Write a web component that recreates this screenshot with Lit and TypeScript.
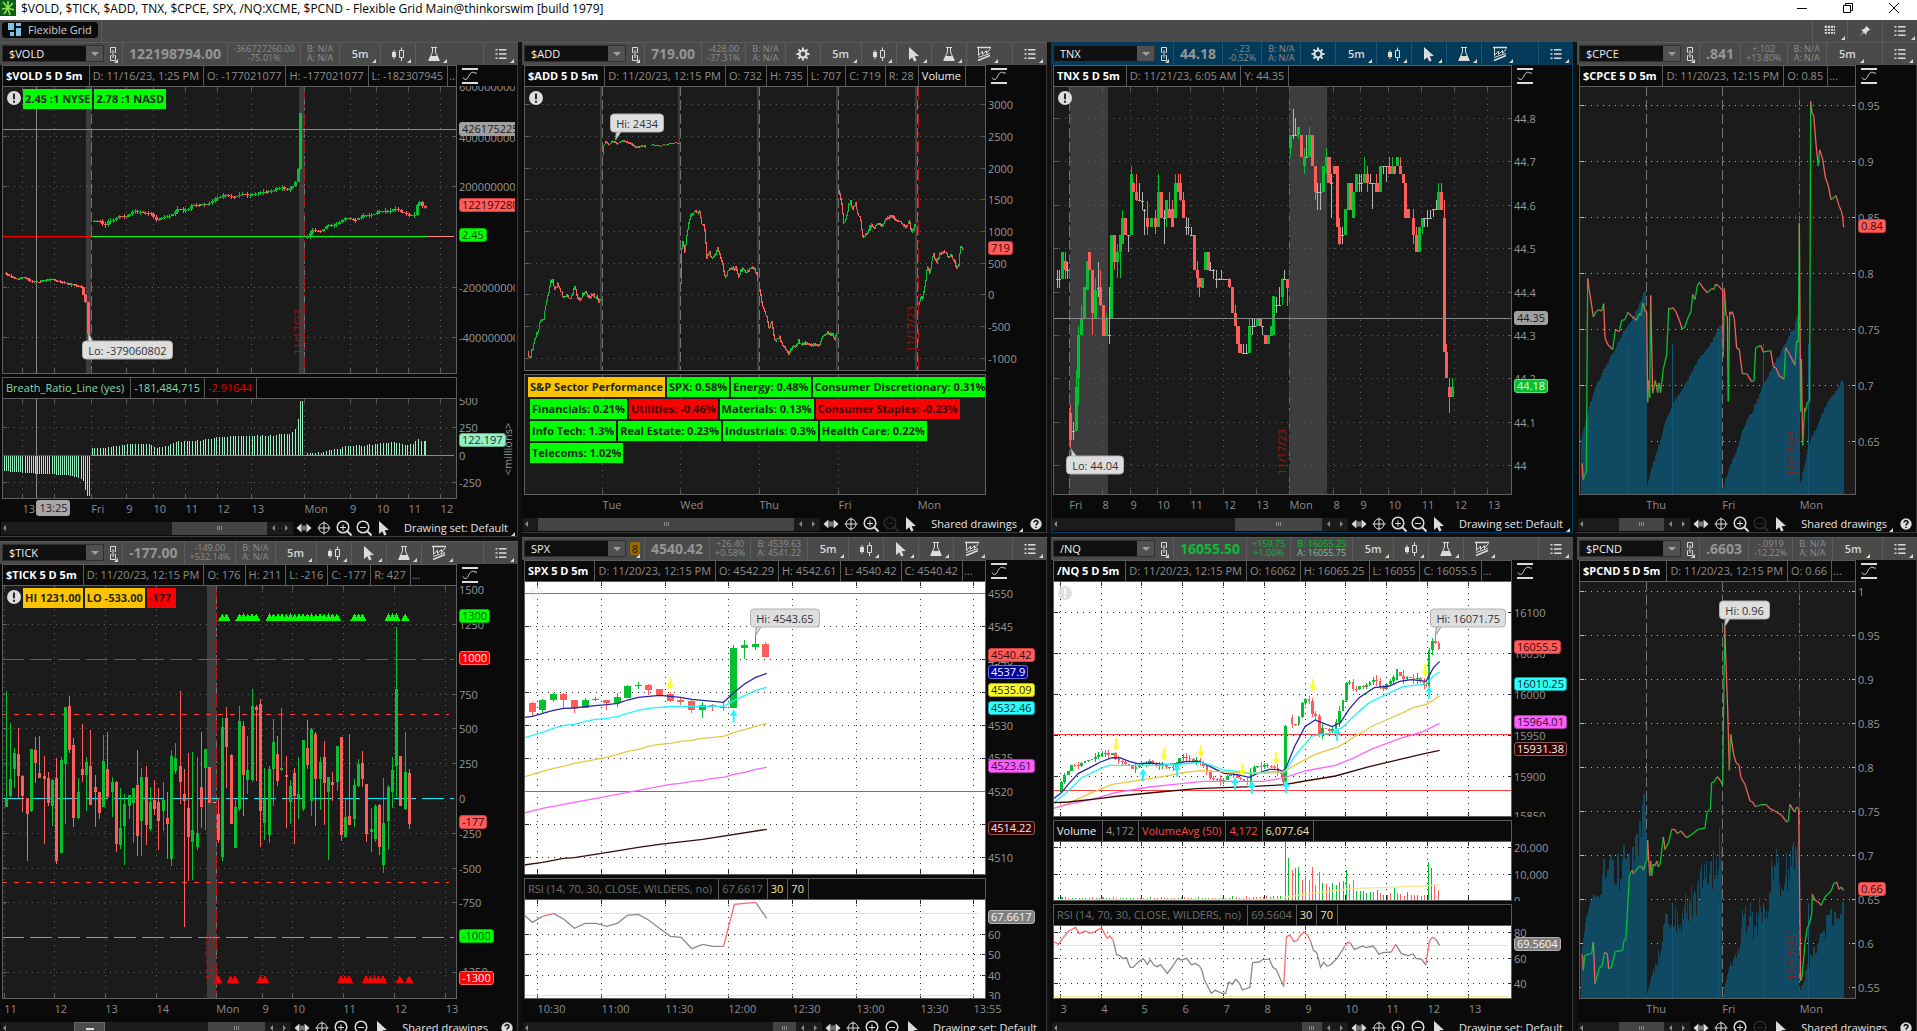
import { LitElement, html, svg, css, nothing, TemplateResult } from "lit";
import { customElement, property } from "lit/decorators.js";
import { classMap } from "lit/directives/class-map.js";

type Pt = [number, number];
type Candle = { x: number; hi: number; top: number; bot: number; lo: number; c: string };
type Drawing = TemplateResult | TemplateResult[];

interface Label { y: number; t: string; tag?: string }
interface Bubble { x: number; y: number; t: string; tip: Pt; side: "up" | "down" }
interface Plot {
  grow: number;
  x: Pt;
  y: Pt;
  theme: string;
  heading?: [string, string][];
  gx: number[];
  gy: number[];
  under?: Drawing;
  art?: Drawing;
  labels: Label[];
  bubble?: Bubble;
  expiry?: Pt;
  alert?: string;
  chips?: [string, string][][];
  unit?: string;
}
interface PanelData {
  symbol: string;
  badge?: string;
  tone: string;
  price: string;
  change: [string, string];
  quote: [string, string];
  tools: string[];
  info: string[];
  plots: Plot[];
  times: [number, string][];
  timeTag?: [number, string];
  thumb: Pt;
  drawings: string;
  help?: boolean;
  canZoomOut?: boolean;
  active?: boolean;
  drawer?: boolean;
}

/* ---------- drawing helpers ---------- */

const pts = (s: string): Pt[] => s.trim().split(/\s+/).map((p) => p.split(",").map(Number) as Pt);

const noise = (n: number) => {
  const v = Math.sin(n * 12.9898) * 43758.5453;
  return v - Math.floor(v) - 0.5;
};

function sample(path: Pt[], step: number): Pt[] {
  const out: Pt[] = [];
  let i = 0;
  for (let x = path[0][0]; x <= path[path.length - 1][0]; x += step) {
    while (i < path.length - 2 && path[i + 1][0] < x) i++;
    const [ax, ay] = path[i];
    const [bx, by] = path[i + 1];
    out.push([x, ay + ((by - ay) * (x - ax)) / (bx - ax || 1)]);
  }
  out.push(path[path.length - 1]);
  return out;
}

function trail(src: string, step: number, width: number, wick: number, rough = 0): TemplateResult[] {
  const p = sample(pts(src), step).map(([x, y]) => [x, y + noise(x) * rough] as Pt);
  return p.slice(1).map(([x, y], i) => {
    const py = p[i][1];
    const top = Math.min(y, py);
    const h = Math.max(3, Math.abs(y - py));
    const c = y <= py ? "g" : "r";
    const w = wick * (0.5 + noise(x + 3));
    return svg`<rect class=${c} x=${x - width / 2} y=${top} width=${width} height=${h}></rect>
      ${wick ? svg`<rect class=${c} x=${x - 1.5} y=${top - w} width="3" height=${h + 2 * w}></rect>` : nothing}`;
  });
}

function candles(src: string, width: number): TemplateResult[] {
  return src.trim().split(/\n/).flatMap((row) => row.trim().split(/\s*;\s*/)).filter(Boolean).map((row) => {
    const [x, c, hi, top, bot, lo] = row.split(" ");
    const k: Candle = { x: +x, c, hi: +hi, top: +top, bot: +bot, lo: +lo };
    return svg`<rect class=${k.c} x=${k.x - 1.5} y=${k.hi} width="3" height=${Math.max(3, k.lo - k.hi)}></rect>
      <rect class=${k.c} x=${k.x - width / 2} y=${k.top} width=${width} height=${Math.max(3, k.bot - k.top)}></rect>`;
  });
}

const line = (src: string, cls: string) => svg`<polyline class=${"ln " + cls} points=${src}></polyline>`;
const level = (x1: number, x2: number, y: number, cls: string) =>
  svg`<line class=${cls} x1=${x1} x2=${x2} y1=${y} y2=${y}></line>`;
const upright = (x: number, y1: number, y2: number, cls: string) =>
  svg`<line class=${cls} x1=${x} x2=${x} y1=${y1} y2=${y2}></line>`;
const band = (x: number, w: number, y1: number, y2: number) =>
  svg`<rect class="band" x=${x} y=${y1} width=${w} height=${y2 - y1}></rect>`;

const slopes = (src: string) => {
  const p = pts(src);
  return p.slice(1).map(
    ([x, y], i) => svg`<line class=${y <= p[i][1] ? "up" : "down"} x1=${p[i][0]} y1=${p[i][1]} x2=${x} y2=${y}></line>`
  );
};

const bars = (src: string, step: number, base: number, cls: string, rough = 0, width = 3) =>
  sample(pts(src), step).map(([x, y]) => {
    const t = y + noise(x) * rough;
    return svg`<rect class=${cls} x=${x - width / 2} y=${Math.min(t, base)} width=${width} height=${Math.abs(base - t)}></rect>`;
  });

const triangles = (xs: number[], y: number, cls: string) =>
  xs.map((x) => svg`<polygon class=${cls} points=${`${x - 12},${y + 22} ${x},${y} ${x + 12},${y + 22}`}></polygon>`);

const arrows = (src: string, dir: number, cls: string) =>
  pts(src).map(([x, y]) => {
    const e = y - dir * 39;
    const m = y - dir * 19;
    return svg`<polygon class=${cls} points=${`${x},${y} ${x - 11},${m} ${x - 3},${m} ${x - 3},${e} ${x + 3},${e} ${x + 3},${m} ${x + 11},${m}`}></polygon>`;
  });

const run = (from: number, n: number, step = 12.6) => Array.from({ length: n }, (_, i) => from + i * step);

/* ---------- icons ---------- */

const shapes: Record<string, TemplateResult> = {
  link: svg`<path class="s" d="M6.500 6.500h-1v-5h5v5h-1M6.500 9.500h-1v5h5v-5h-1M8 4v8"/>`,
  gear: svg`<path class="s" stroke-width="2" d="M8 1.500v13M1.500 8h13M3.400 3.400l9.200 9.200M12.600 3.400l-9.200 9.200"/><circle class="f" cx="8" cy="8" r="4.600"/><circle class="hole" cx="8" cy="8" r="2.400"/>`,
  candles: svg`<path class="f" d="M2 6h4v5H2zM3.500 4h1v9h-1z"/><path class="s" d="M9.500 4.500h4v7h-4zM11.500 4.500V1.500M11.500 11.500V15"/>`,
  cursor: svg`<path class="f" d="M3 1v13l3.200-2.800 2 4.300 2.400-1.100-2-4.200 4.400-.3z"/>`,
  flask: svg`<path class="s" d="M5 1.500h6M6.500 1.500v4.500L3 14h10L9.500 6V1.500"/><path class="f" d="M4.600 10h6.800l2.400 5H2.200z"/>`,
  pattern: svg`<path class="s" stroke-width="1.500" d="M1 1.500h14M2 14.500l12-5"/><path class="s" d="M2.500 2v7.500l4-4.500v3.500l4-4v3l4-5M2 11.500l12-4"/>`,
  list: svg`<path class="f" d="M2.500 3h2v1.500h-2zM6 3h7.500v1.500H6zM2.500 7.200h2v1.500h-2zM6 7.200h7.500v1.500H6zM2.500 11.500h2V13h-2zM6 11.500h7.500V13H6z"/>`,
  curve: svg`<path class="s" stroke-width="2" d="M0 1h16M0 15h16"/><path class="s" d="M1 9.500c1.500 3 4 2.500 5.500-1S10.500 3.500 12 4.500s3 .5 3 .5"/>`,
  pan: svg`<path class="f" d="M.5 8L5.500 3.500v9zM15.500 8l-5-4.500v9zM6.500 5.500h1v5h-1zM8.500 5.500h1v5h-1z"/>`,
  cross: svg`<circle class="s" cx="8" cy="8" r="5"/><path class="s" d="M8 1.500v13M1.500 8h13"/>`,
  zoomin: svg`<circle class="s" stroke-width="1.500" cx="7" cy="7" r="5.800"/><path class="s" stroke-width="2" d="M11.500 11.500l4 4"/><path class="s" d="M4 7.500h6M7 4.500v6"/>`,
  zoomout: svg`<circle class="s" stroke-width="1.500" cx="7" cy="7" r="5.800"/><path class="s" stroke-width="2" d="M11.500 11.500l4 4"/><path class="s" d="M4 7.500h6"/>`,
  help: svg`<circle class="f" cx="8" cy="8" r="6.500"/><path class="dark" d="M5.800 6.300c0-3 4.600-2.800 4.400 0-.1 1.500-2.200 1.600-2.200 3.400M8 11v1.600"/>`,
  alert: svg`<circle class="f" cx="8" cy="8" r="7"/><path class="dark" d="M8 3.500v5.800M8 10.700v2"/>`,
  grid: svg`<path class="f" d="M2 2h2.500v2.500H2zM5.500 2H8v2.500H5.500zM9 2h2.500v2.500H9zM12.300 2h1.500v2.500h-1.500zM2 5.800h2.500v2H2zM5.500 5.800H8v2H5.500zM9 5.800h2.500v2H9zM12.300 5.800h1.500v2h-1.500zM2 9h2.500v2H2zM5.500 9H8v2H5.500zM9 9h2.500v2H9zM12.300 9h1.500v2h-1.500z"/>`,
  pin: svg`<path class="f" d="M9.500 2l4.500 4.500-1.500.5-2.500 2.500-.5 3L6.600 9.600 2 14l4-5.200L3.500 6.500l3-.5L9 3.500z"/>`,
};
const icon = (name: string, size = 16) =>
  html`<svg class="icon" width=${size} height=${size} viewBox="0 0 16 16" aria-hidden="true">${shapes[name]}</svg>`;

const iconCss = css`
  .icon { display: block; color: #dcdcdc; }
  .icon .f { fill: currentColor; }
  .icon .s { fill: none; stroke: currentColor; }
  .icon .hole { fill: #4a4a4a; }
  .icon .dark { fill: none; stroke: #141414; stroke-width: 1.800; }
  button { font: inherit; color: inherit; background: none; border: 0; padding: 0; margin: 0; }
`;

/* ---------- panels ---------- */

const TNX_BARS = `28 w 720 748 748 773;35 w 720 748 748 773;43 g 665 667 748 748;51 r 665 693 720 748;58 w 695 720 720 748
66 r 1125 1150 1229 1255;76 w 1177 1204 1204 1229;84 g 1021 1071 1204 1204;91 g 888 915 1045 1125;100 g 825 863 915 915
108 g 770 770 863 863;116 g 693 693 780 780;122 r 665 667 720 720;131 r 720 720 850 915;141 g 745 780 865 865
149 w 695 775 775 800;156 r 720 770 825 827;165 r 825 825 917 917;173 g 850 865 917 917;181 w 770 915 915 943
187 g 616 616 865 865;196 r 616 616 695 720;205 g 642 667 695 745;214 g 616 616 667 745;221 g 540 563 642 642
229 r 563 563 616 616;238 w 616 616 616 667;247 g 408 433 616 616;253 r 455 459 487 487;261 r 433 487 510 513
270 w 459 510 510 513;279 w 485 513 513 540;286 w 538 540 540 616;294 r 513 563 590 616;305 g 563 563 590 590
318 r 540 563 590 613;327 g 433 487 590 590;335 r 487 487 563 563;344 w 540 563 563 642;351 g 510 510 563 590
359 r 487 538 563 563;368 r 510 538 590 590;377 g 433 459 563 563;385 r 433 459 487 487;393 r 433 459 510 513
400 r 487 510 563 565;409 w 560 590 590 616;416 w 563 590 590 616;424 w 590 616 616 616;433 r 616 616 720 720
442 r 693 720 745 773;448 r 745 745 770 800;457 g 745 745 773 773;466 g 665 667 720 720;474 r 665 667 720 720
482 w 695 720 720 722;490 w 718 720 720 748;498 w 720 748 748 775;506 w 745 748 748 750;514 w 720 748 748 750
523 w 747 748 748 750;531 w 747 748 748 750;537 r 745 748 770 775;545 r 770 770 850 850;554 r 825 850 888 888
562 r 888 888 943 968;570 r 943 943 968 968;579 w 943 968 968 968;587 w 943 968 968 968;597 g 865 888 968 968
604 w 865 888 888 915;612 w 865 888 888 888;620 g 865 865 888 888;628 r 865 865 888 888;635 w 888 888 888 915
644 r 915 915 943 943;652 g 915 915 943 943;661 g 888 888 917 917;668 g 798 798 915 915;676 w 800 825 825 850
685 w 770 825 825 827;693 g 745 748 800 825;700 w 720 748 748 748;709 r 748 748 773 827;718 g 316 316 355 382
726 w 238 316 316 327;733 w 265 316 316 318;742 g 290 290 316 327;750 r 316 316 382 382;758 g 355 382 408 433
765 w 316 382 382 382;774 g 290 316 382 382;782 r 316 316 408 408;790 r 408 408 487 510;798 w 459 487 487 540
806 w 459 487 487 540;815 g 408 408 487 487;824 g 355 382 408 433;831 r 382 382 459 459;839 w 433 459 459 563
848 r 408 408 433 433;855 r 408 408 590 590;862 r 563 590 642 644;872 w 590 616 616 642;880 g 538 538 616 616
889 g 459 459 540 540;896 r 459 459 540 540;904 g 487 487 563 563;913 g 433 433 487 487;921 w 433 459 459 487
928 w 433 459 459 487;937 g 382 433 459 459;945 r 408 433 459 487;953 w 433 459 459 459;961 w 459 459 459 538
970 r 433 459 487 487;977 r 459 459 487 487;984 g 408 408 487 487;993 w 408 408 408 433;1001 w 408 408 408 455
1010 r 382 408 433 433;1018 g 382 408 433 433;1026 r 408 408 433 433;1034 g 382 382 408 408;1042 r 382 408 433 433
1050 r 433 433 459 459;1058 r 459 459 563 563;1067 r 538 538 563 563;1081 r 538 563 616 642;1090 r 590 616 667 667
1099 g 590 590 667 667;1106 g 563 563 590 613;1114 w 563 563 563 590;1122 w 540 563 563 590;1131 w 540 563 563 565
1140 w 538 538 538 560;1148 w 510 538 538 538;1156 g 459 487 540 540;1164 r 459 487 540 540;1173 r 510 563 965 965
1179 r 942 965 1045 1045;1188 r 1045 1071 1100 1150;1196 g 1045 1071 1100 1100`;

const TICK_BARS = `19 g 465 788 812 812;31 g 562 729 780 782;43 g 635 650 699 755;55 r 577 654 720 785;67 r 717 720 780 828
82 r 785 787 833 976;94 g 638 640 825 828;106 r 603 642 682 742;118 r 600 710 725 727;133 r 660 720 728 923
145 r 708 726 800 810;157 g 730 732 810 870;169 r 667 725 975 983;184 g 663 671 950 952;196 g 512 514 683 865
207 r 480 510 642 650;219 r 605 627 846 872;234 g 727 768 846 848;246 r 564 699 717 737;258 g 664 678 717 824
270 r 582 690 807 807;285 r 716 753 768 872;297 r 767 768 832 850;309 g 597 675 812 812;321 r 587 699 783 785
336 g 724 738 768 842;348 r 736 738 923 947;360 g 757 876 926 940;372 g 774 803 870 987;387 g 776 777 810 850
399 g 755 756 801 920;411 r 642 746 900 960;423 g 697 723 855 960;438 r 690 723 867 928;450 g 752 797 879 884
462 r 732 792 819 836;474 r 757 797 855 941;489 g 737 792 825 886;501 r 768 846 864 968;513 g 642 660 969 990
525 g 621 666 705 713;540 r 464 690 738 803;552 r 699 773 795 1172;564 r 651 816 903 1034;576 g 649 882 918 1032
590 g 663 891 934 941;602 r 588 753 813 876;614 g 638 639 696 881;626 r 692 693 801 801;641 w 799 799 799 799
653 r 785 834 911 920;665 g 547 573 963 974;677 r 513 546 633 755;692 r 653 656 864 864;704 g 785 813 936 936
716 g 510 555 819 825;728 r 555 570 717 840;740 g 600 701 732 774;755 g 459 510 732 738;767 r 507 513 522 735
779 r 490 503 825 932;791 g 697 789 861 911;806 g 690 698 897 921;818 g 549 618 699 809;830 r 600 654 735 749
842 g 515 695 702 704;857 r 660 716 723 876;869 g 731 749 798 864;881 r 697 711 780 923;893 g 663 773 786 850
908 g 611 612 819 825;920 r 552 636 687 699;932 g 576 579 795 840;944 r 588 594 729 869;959 g 664 678 729 822
971 r 615 663 741 868;982 g 722 723 768 971;994 r 708 737 747 795;1009 g 630 630 738 764;1021 r 603 603 897 914
1033 g 785 843 903 903;1045 r 594 840 867 867;1060 g 729 746 849 873;1072 g 669 684 750 752;1084 r 645 681 729 752
1096 r 743 744 893 917;1111 g 816 879 888 947;1123 g 803 809 909 917;1135 r 803 807 933 956;1147 g 726 861 987 1010
1162 g 747 752 855 941;1174 g 663 702 768 816;1186 g 272 459 690 783;1198 r 660 660 810 810;1213 g 588 708 819 822
1225 r 699 711 864 879`;

const SPX_BARS = `37 r 497 501 527 543;67 g 489 491 521 530;99 g 470 473 491 498;129 r 470 473 491 518;161 r 491 491 515 530
193 g 487 491 515 515;223 g 482 489 493 495;257 r 491 491 501 523;288 g 470 484 502 513;318 g 446 450 486 486
350 g 437 447 449 459;380 r 444 447 461 478;412 r 459 459 477 479;445 r 467 473 494 498;475 r 484 491 497 506
508 r 491 494 521 532;540 g 497 507 521 545;570 r 504 507 509 525;602 r 499 512 514 525;632 g 327 336 516 516
664 g 312 327 335 370;697 g 297 324 332 341;727 r 319 324 362 362`;

const NQ_PATH = `30,762 38,740 50,718 60,708 72,685 90,688 110,678 125,673 140,662 155,650 165,648 172,658 188,648 198,660 202,676 215,675 225,678 238,686 250,697 262,692 280,684 300,678 320,686 340,684 355,697 375,688 385,668 400,665 425,672 445,676 458,688 470,706 480,725 500,727 515,738 530,720 545,716 560,722 575,738 590,735 603,697 620,695 640,688 655,688 670,697 690,715 697,735`;
const NQ_PATH2 = `712,549 725,570 738,560 748,515 758,484 770,488 783,540 797,543 803,600 815,570 825,588 838,590 850,560 865,517 875,478 884,436 897,440 905,465 920,447 935,455 950,437 965,430 978,445 990,455 1005,447 1020,430 1026,402 1037,410 1050,425 1065,428 1080,425 1100,432 1118,448`;
const NQ_VOLUME = `702,918,g 712,966,g 722,1002,r 733,996,g 742,993,g 753,1032,r 761,1020,r 773,1032,r 782,993,r 791,1047,r 803,1008,r 812,1041,g 824,1043,r 832,1053,g 842,1041,g 853,1047,g 862,1038,g 874,1036,g 883,1002,g 892,1044,r 904,1032,r 913,1065,g 924,1065,g 933,1065,g 942,1071,g 954,1068,g 963,1068,r 974,1062,g 983,1071,r 992,1077,g 1003,1077,g 1013,1071,r 1025,1056,g 1033,1071,r 1042,1075,r 1054,1080,r 1063,1068,g 1075,1077,r 1084,1077,r 1092,1077,g 1104,1080,r 1113,1077,r 1125,978,g 1134,996,g 1143,1047,r 1156,1062,r`;

const L = (y: number, t: string, tag?: string): Label => ({ y, t, tag });
const xs = (t: [number, string][]) => t.map(([x]) => x);

const voldTimes: [number, string][] = [[67, "13"], [273, "Fri"], [378, "9"], [459, "10"], [555, "11"], [650, "12"], [752, "13"], [911, "Mon"], [1047, "9"], [1127, "10"], [1222, "11"], [1318, "12"]];
const tickTimes: [number, string][] = [[13, "11"], [163, "12"], [315, "13"], [468, "14"], [647, "Mon"], [785, "9"], [875, "10"], [1027, "11"], [1180, "12"], [1333, "13"]];
const addTimes: [number, string][] = [[244, "Tue"], [474, "Wed"], [708, "Thu"], [942, "Fri"], [1176, "Mon"]];
const spxTimes: [number, string][] = [[52, "10:30"], [241, "11:00"], [430, "11:30"], [616, "12:00"], [806, "12:30"], [995, "13:00"], [1184, "13:30"], [1341, "13:55"]];
const tnxTimes: [number, string][] = [[63, "Fri"], [161, "8"], [244, "9"], [323, "10"], [421, "11"], [519, "12"], [616, "13"], [714, "Mon"], [844, "8"], [924, "9"], [1007, "10"], [1105, "11"], [1202, "12"], [1300, "13"]];
const nqTimes: [number, string][] = [[37, "3"], [158, "4"], [277, "5"], [398, "6"], [519, "7"], [640, "8"], [761, "9"], [880, "10"], [1001, "11"], [1122, "12"], [1244, "13"]];
const dayTimes: [number, string][] = [[229, "Thu"], [457, "Fri"], [689, "Mon"]];

const spxGrid = xs(spxTimes);
const nqGrid = xs(nqTimes);
const daysOf = (y1: number, y2: number) => [upright(229, y1, y2, "day"), upright(457, y1, y2, "day"), upright(689, y1, y2, "day"), upright(689, y1, y2, "expiry")];
const marks = (y1: number, y2: number) => [173, 307, 446, 580, 715].map((x) => upright(x, y1, y2, "mark"));

const vold: PanelData = {
  symbol: "$VOLD", tone: "mute", price: "122198794.00", change: ["-366727260.00", "-75.01%"], quote: ["B: N/A", "A: N/A"],
  tools: ["5m", "candles", "flask"],
  info: ["$VOLD 5 D 5m", "D: 11/16/23, 1:25 PM", "O: -177021077", "H: -177021077", "L: -182307945", "..."],
  plots: [
    {
      grow: 288, x: [6, 1367], y: [258, 1122], theme: "dark", gx: [163, ...xs(voldTimes)], gy: [409, 559, 862, 1012],
      under: [band(257, 15, 258, 1122), band(895, 15, 258, 1122), upright(273, 258, 1122, "day"), upright(911, 258, 1122, "day"), upright(911, 258, 1122, "expiry")],
      art: [
        level(6, 1367, 388, "hair"), upright(109, 258, 1122, "hair"),
        level(6, 273, 709, "zr"), level(273, 1276, 709, "zg"), level(1276, 1357, 709, "zp"),
        ...trail("12,820 30,829 50,837 68,832 90,842 112,847 130,840 150,837 175,843 200,850 225,857 243,862 250,885 256,895 264,998", 7, 9, 4, 3),
        ...trail("276,664 295,660 308,672 316,678 325,662 345,658 355,646 378,648 400,634 430,636 450,640 468,660 490,650 515,644 530,628 560,630 575,615 620,613 640,598 670,585 695,592 720,582 750,585 790,577 815,572 840,560 860,571 875,560 888,540 893,500 900,340", 8, 9, 8, 4),
        ...trail("912,712 922,708 935,690 960,693 980,675 1010,672 1035,652 1060,662 1085,648 1110,643 1140,632 1160,636 1185,626 1200,636 1225,647 1245,643 1250,598 1258,610 1265,622 1274,618", 8, 9, 8, 4),
      ],
      labels: [L(262, "600000000"), L(413, "400000000"), L(561, "200000000"), L(864, "-200000000"), L(1014, "-400000000"), L(387, "426175225", "gray"), L(615, "122197280", "red"), L(706, "2.45", "lime")],
      bubble: { x: 246, y: 1050, t: "Lo: -379060802", tip: [264, 998], side: "down" },
      expiry: [890, 995], alert: "white",
      chips: [[["2.45 :1 NYSE", "lime"], ["2.78 :1 NASD", "lime"]]],
    },
    {
      grow: 101, x: [6, 1367], y: [1194, 1497], theme: "dark", gx: [163, ...xs(voldTimes)], gy: [1282, 1447],
      heading: [["Breath_Ratio_Line (yes)", "mint"], ["-181,484,715", "mint"], ["-2.91644", "redtext"]],
      art: [
        ...bars("13,1413 60,1417 110,1421 200,1425 235,1432 250,1443 258,1487 268,1487", 6.2, 1366, "m"),
        ...bars("276,1343 300,1345 340,1339 390,1331 440,1332 470,1343 500,1337 530,1325 600,1321 640,1314 700,1308 800,1307 870,1301 885,1285 890,1270 897,1203 905,1203", 8.1, 1366, "m", 3),
        ...bars("920,1360 960,1358 985,1350 1015,1348 1035,1339 1100,1335 1140,1330 1185,1326 1215,1335 1240,1332 1250,1314 1257,1324 1274,1323", 8.1, 1366, "m", 3),
        upright(109, 1194, 1497, "hair"),
        level(6, 273, 1366, "zr"), level(273, 1276, 1366, "zg"), level(1276, 1357, 1366, "hair"),
      ],
      labels: [L(1203, "500"), L(1284, "250"), L(1368, "0"), L(1449, "-250"), L(1321, "122.197", "mint")],
      unit: "<millions>",
    },
  ],
  times: voldTimes, timeTag: [109, "13:25"], thumb: [62, 38], drawings: "Drawing set: Default", canZoomOut: true,
};

const tick: PanelData = {
  symbol: "$TICK", tone: "mute", price: "-177.00", change: ["-149.00", "+532.14%"], quote: ["B: N/A", "A: N/A"],
  tools: ["5m", "candles", "cursor", "flask", "pattern"],
  info: ["$TICK 5 D 5m", "D: 11/20/23, 12:15 PM", "O: 176", "H: 211", "L: -216", "C: -177", "R: 427", "..."],
  plots: [{
    grow: 414, x: [6, 1367], y: [147, 1389], theme: "dark", gx: xs(tickTimes), gy: [265, 475, 577, 683, 892, 997, 1100, 1309],
    under: [band(619, 28, 147, 1389), upright(648, 147, 1389, "day"), upright(648, 147, 1389, "expiry")],
    art: [
      level(6, 1357, 370, "lr"), level(6, 1342, 535, "sr"), level(6, 1342, 1040, "sr"), level(6, 1357, 1204, "lg"), level(6, 1357, 787, "lc"),
      ...candles(TICK_BARS, 8),
      ...triangles([665, 677, ...run(716, 5), ...run(806, 17), 1060, 1072, 1084, 1162, 1174, 1186, 1212], 232, "lime"),
      ...triangles([652, 690, 703, 779, 793, 1020, 1032, 1044, ...run(1095, 5), 1196, 1224], 1318, "pure"),
    ],
    labels: [L(162, "1500"), L(268, "1250"), L(477, "750"), L(579, "500"), L(684, "250"), L(790, "0"), L(894, "-250"), L(999, "-500"), L(1102, "-750"), L(1309, "-1250"), L(240, "1300", "lime"), L(366, "1000", "pure"), L(858, "-177", "red"), L(1200, "-1000", "lime"), L(1326, "-1300", "pure")],
    expiry: [626, 1263], alert: "white",
    chips: [[["HI 1231.00", "gold"], ["LO -533.00", "gold"], ["-177 ", "pure"]]],
  }],
  times: tickTimes, thumb: [77, 23], drawings: "Shared drawings", help: true, canZoomOut: true, drawer: true,
};

const addDays = [244, 474, 708, 942, 1176];
const add: PanelData = {
  symbol: "$ADD", tone: "mute", price: "719.00", change: ["-428.00", "-37.31%"], quote: ["B: N/A", "A: N/A"],
  tools: ["gear", "5m", "candles", "cursor", "flask", "pattern"],
  info: ["$ADD 5 D 5m", "D: 11/20/23, 12:15 PM", "O: 732", "H: 735", "L: 707", "C: 719", "R: 28", "*Volume"],
  plots: [
    {
      grow: 285, x: [12, 1378], y: [168, 1023], theme: "dark", gx: [], gy: [223, 319, 415, 509, 604, 700, 794, 889, 986],
      under: [...addDays.map((x) => band(x - 7, 6, 168, 1023)), ...addDays.map((x) => upright(x, 168, 1023, "day")), upright(1178, 168, 1023, "expiry")],
      art: [
        ...trail("22,960 26,990 33,970 40,940 48,920 58,880 70,870 76,830 85,790 90,755 97,752 102,785 110,762 120,780 128,805 135,805 142,795 150,808 160,765 168,800 180,805 190,785 200,800 212,795 222,800 232,812 240,805", 3, 3, 4, 14),
        ...trail("244,375 247,345 254,333 262,345 275,332 288,341 305,331 325,338 343,350 370,347", 3, 3, 2, 3),
        ...trail("385,343 400,346 415,347 435,343 450,338 472,338", 3, 3, 0, 4),
        ...trail("474,758 475,680 479,628 486,662 493,610 500,570 508,548 518,543 527,555 531,540 537,580 545,590 552,680 560,665 569,688 577,675 585,655 592,675 600,700 607,745 616,722 625,718 637,708 645,740 656,712 668,730 680,715 693,715 702,742", 3, 3, 4, 10),
        ...trail("709,780 715,815 722,840 730,862 738,900 744,870 752,920 758,935 765,920 775,945 782,955 792,972 800,955 808,948 815,950 822,930 832,945 845,938 860,945 875,940 884,950 895,920 910,908 925,915 932,930 935,915", 3, 3, 4, 8),
        ...trail("942,485 950,510 957,580 965,565 972,525 978,515 984,540 993,520 1000,560 1007,565 1014,620 1028,610 1038,580 1046,597 1054,580 1068,587 1080,568 1100,557 1115,570 1128,583 1140,590 1150,575 1158,605 1170,580", 3, 3, 4, 8),
        ...trail("1177,820 1178,880 1181,790 1187,815 1195,770 1203,710 1210,730 1220,672 1232,697 1240,670 1250,668 1258,665 1265,685 1275,672 1283,695 1292,712 1299,700 1301,645 1305,655 1310,660", 3, 3, 4, 8),
      ],
      labels: [L(225, "3000"), L(321, "2500"), L(417, "2000"), L(511, "1500"), L(606, "1000"), L(702, "500"), L(796, "0"), L(891, "-500"), L(988, "-1000"), L(654, "719", "red")],
      bubble: { x: 267, y: 280, t: "Hi: 2434", tip: [283, 330], side: "up" },
      expiry: [1156, 897], alert: "white",
    },
    {
      grow: 121, x: [12, 1378], y: [1032, 1395], theme: "dark", gx: addDays, gy: [], labels: [],
      chips: [
        [["S&P Sector Performance", "gold"], ["SPX: 0.58%", "lime"], ["Energy: 0.48%", "lime"], ["Consumer Discretionary: 0.31%", "lime"]],
        [["Financials: 0.21%", "lime"], ["Utilities: -0.46%", "pure"], ["Materials: 0.13%", "lime"], ["Consumer Staples: -0.23%", "pure"]],
        [["Info Tech: 1.3%", "lime"], ["Real Estate: 0.23%", "lime"], ["Industrials: 0.3%", "lime"], ["Health Care: 0.22%", "lime"]],
        [["Telecoms: 1.02%", "lime"]],
      ],
    },
  ],
  times: addTimes, thumb: [0, 100], drawings: "Shared drawings", help: true,
};

const spx: PanelData = {
  symbol: "SPX", badge: "8", tone: "mute", price: "4540.42", change: ["+26.40", "+0.58%"], quote: ["B: 4539.63", "A: 4541.22"],
  tools: ["5m", "candles", "cursor", "flask", "pattern"],
  info: ["SPX 5 D 5m", "D: 11/20/23, 12:15 PM", "O: 4542.29", "H: 4542.61", "L: 4540.42", "C: 4540.42", "..."],
  plots: [
    {
      grow: 294, x: [12, 1378], y: [135, 1017], theme: "light", gx: spxGrid, gy: [271, 370, 469, 569, 667, 865, 964],
      art: [
        level(12, 1378, 172, "rule"), level(12, 1378, 767, "rule"),
        ...candles(SPX_BARS, 21),
        line("12,544 37,541 67,532 99,523 129,517 161,516 193,512 223,509 257,506 290,502 318,492 350,484 412,478 445,481 475,484 508,490 540,493 602,499 632,470 664,444 697,424 730,412", "navy"),
        line("12,606 67,589 99,577 129,568 161,565 193,556 223,550 257,547 290,541 318,532 350,523 380,517 412,514 445,511 602,511 632,494 697,463 730,454", "cyan"),
        line("12,723 67,706 99,697 129,691 161,682 241,667 290,655 318,646 350,640 380,631 412,625 445,622 475,616 508,613 540,607 602,601 632,590 697,571 730,562", "amber"),
        line("12,831 67,817 129,805 241,784 350,763 445,745 475,742 508,736 540,733 570,727 602,724 632,715 664,709 697,700 730,694", "pink"),
        line("12,987 67,979 129,967 161,965 241,952 350,934 412,925 540,910 730,880", "brown"),
        ...arrows("444,463", 1, "ay"), ...arrows("632,520", -1, "ac"),
      ],
      labels: [L(174, "4550"), L(273, "4545"), L(375, "4540"), L(570, "4530"), L(667, "4525"), L(768, "4520"), L(966, "4510"), L(357, "4540.42", "red"), L(408, "4537.9", "navy"), L(462, "4535.09", "yellow"), L(516, "4532.46", "cyan"), L(690, "4523.61", "pink"), L(876, "4514.22", "brown")],
      bubble: { x: 681, y: 247, t: "Hi: 4543.65", tip: [696, 300], side: "up" },
      alert: "faint",
    },
    {
      grow: 100, x: [12, 1378], y: [1089, 1389], theme: "light", gx: spxGrid, gy: [1195, 1255, 1318],
      heading: [["RSI (14, 70, 30, CLOSE, WILDERS, no)", "dim"], ["67.6617", "dim"], ["30", "cream"], ["70", "cream"]],
      art: [
        level(12, 1357, 1132, "khaki"), level(12, 1357, 1379, "khaki"),
        line("12,1137 37,1159 67,1141", "grayln"), line("67,1141 99,1132", "coral"),
        line("99,1132 129,1149 161,1177 193,1162 225,1162 257,1171 288,1162 318,1138 350,1135 380,1152 412,1177 445,1201 477,1204 508,1238 540,1225 570,1231 602,1231", "grayln"),
        line("602,1231 634,1105 697,1099", "coral"), line("697,1099 730,1147", "grayln"),
      ],
      labels: [L(1197, "60"), L(1257, "50"), L(1320, "40"), L(1379, "30"), L(1142, "67.6617", "steel")],
    },
  ],
  times: spxTimes, thumb: [91, 9], drawings: "Drawing set: Default", canZoomOut: true,
};

const tnx: PanelData = {
  symbol: "TNX", tone: "mute", price: "44.18", change: ["-.23", "-0.52%"], quote: ["B: N/A", "A: N/A"], active: true,
  tools: ["gear", "5m", "candles", "cursor", "flask", "pattern"],
  info: ["TNX 5 D 5m", "D: 11/21/23, 6:05 AM", "Y: 44.35"],
  plots: [{
    grow: 409, x: [15, 1372], y: [168, 1395], theme: "dark", gx: xs(tnxTimes), gy: [265, 394, 526, 655, 787, 916, 1045, 1177, 1306],
    under: [band(64, 114, 168, 1395), band(715, 110, 168, 1395), upright(63, 168, 1395, "day"), upright(714, 168, 1395, "day"), upright(714, 168, 1395, "expiry")],
    art: [...candles(TNX_BARS, 9), level(15, 1372, 866, "hair")],
    labels: [L(267, "44.8"), L(396, "44.7"), L(528, "44.6"), L(657, "44.5"), L(789, "44.4"), L(918, "44.3"), L(1046, "44.2"), L(1179, "44.1"), L(1308, "44"), L(864, "44.35", "gray"), L(1068, "44.18", "green")],
    bubble: { x: 54, y: 1306, t: "Lo: 44.04", tip: [68, 1256], side: "down" },
    expiry: [693, 1267], alert: "white",
  }],
  times: tnxTimes, thumb: [66, 34], drawings: "Drawing set: Default", canZoomOut: true,
};

const nq: PanelData = {
  symbol: "/NQ", tone: "gain", price: "16055.50", change: ["+159.75", "+1.00%"], quote: ["B: 16055.25", "A: 16055.75"],
  tools: ["5m", "candles", "flask", "pattern"],
  info: ["/NQ 5 D 5m", "D: 11/20/23, 12:15 PM", "O: 16062", "H: 16065.25", "L: 16055", "C: 16055.5", "..."],
  plots: [
    {
      grow: 236, x: [15, 1372], y: [135, 843], theme: "light", gx: nqGrid, gy: [229, 352, 475, 598, 721],
      art: [
        level(15, 1372, 595, "rule"), level(15, 1372, 763, "rule"),
        ...trail(NQ_PATH, 10, 8, 12, 8), ...candles("697 r 700 706 738 742;703 g 567 571 734 740", 8),
        ...trail(NQ_PATH2, 10, 8, 16, 10),
        ...candles("1127 g 337 343 449 452;1136 g 307 316 342 358;1146 r 298 316 322 325;1156 r 315 321 338 342", 8),
        line("15,789 38,772 60,745 90,712 120,697 155,678 190,665 215,666 240,676 265,683 300,681 350,686 380,683 410,676 450,677 480,692 520,712 560,716 595,724 625,710 655,700 680,701 697,706 705,692 730,630 760,572 790,552 815,562 840,572 865,560 890,520 920,485 965,455 1010,450 1040,436 1075,431 1118,436 1140,395 1158,376", "navy"),
        line("15,803 60,765 100,725 150,700 180,688 240,688 340,687 400,684 450,679 490,690 520,702 570,707 600,712 650,708 700,708 730,660 780,600 830,592 870,575 910,535 950,500 1000,475 1050,452 1118,444 1140,420 1158,408", "cyan"),
        line("15,818 60,802 130,770 190,745 270,733 340,722 400,710 450,704 600,712 690,710 740,682 790,655 860,632 910,600 960,570 1000,552 1050,530 1080,515 1120,505 1158,480", "amber"),
        line("15,817 60,805 130,790 200,770 300,753 400,742 460,736 640,736 700,725 760,705 850,688 900,668 960,638 1040,608 1110,586 1158,562", "pink"),
        line("15,800 60,798 150,788 210,780 330,768 440,758 520,755 600,752 700,746 760,735 850,720 950,692 1050,668 1100,656 1158,643", "brown"),
        ...arrows("201,645 343,675 452,665 575,720 674,687 784,468 1115,423", 1, "ay"),
        ...arrows("281,697 382,683 553,723 603,734 704,733 855,575 1127,450", -1, "ac"),
      ],
      labels: [L(231, "16100"), L(354, "16050"), L(478, "16000"), L(600, "15950"), L(723, "15900"), L(841, "15850"), L(333, "16055.5", "red"), L(444, "16010.25", "cyan"), L(558, "15964.01", "pink"), L(639, "15931.38", "brown")],
      bubble: { x: 1131, y: 247, t: "Hi: 16071.75", tip: [1145, 300], side: "up" },
      alert: "pale",
    },
    {
      grow: 60, x: [15, 1372], y: [915, 1095], theme: "light", gx: nqGrid, gy: [934, 1016],
      heading: [["Volume", "white"], ["4,172", "mid"], ["VolumeAvg (50)", "redsoft"], ["4,172", "redsoft"], ["6,077.64", "cream"]],
      art: [
        ...run(30, 66, 10.1).map((x, i) => svg`<rect class=${i % 7 === 3 || (i > 8 && i % 3 === 1) ? "r" : "g"} x=${x} y=${1087 - Math.abs(noise(i)) * (i > 50 ? 16 : 6)} width="3" height="14"></rect>`),
        ...NQ_VOLUME.split(" ").map((s) => { const [x, y, c] = s.split(","); return svg`<rect class=${c} x=${+x - 1.5} y=${y} width="3" height=${1095 - +y}></rect>`; }),
        line("30,1091 690,1090 705,1083 780,1072 850,1063 900,1058 1000,1054 1110,1050 1158,1046", "khaki"),
      ],
      labels: [L(936, "20,000"), L(1017, "10,000"), L(1094, "0")],
    },
    {
      grow: 74, x: [15, 1372], y: [1167, 1389], theme: "light", gx: nqGrid, gy: [1189, 1268, 1343],
      heading: [["RSI (14, 70, 30, CLOSE, WILDERS, no)", "dim"], ["69.5604", "dim"], ["30", "cream"], ["70", "cream"]],
      art: [
        level(15, 1360, 1228, "khaki"), level(15, 1360, 1381, "khaki"),
        line("15,1216 32,1225 45,1205 62,1185 82,1174 93,1193 110,1185 125,1192 140,1186 158,1176 175,1207 183,1200 193,1213", "coral"),
        line("193,1213 203,1257 212,1258 222,1268 232,1265 243,1294 252,1294 268,1277 282,1268 294,1285 303,1272 313,1287 323,1292 333,1286 353,1312 365,1296 384,1267 395,1272 410,1267 425,1287 435,1282 448,1290 455,1302 463,1333 483,1372 495,1363 515,1372 525,1372 535,1338 545,1345 555,1330 565,1340 575,1362 597,1354 605,1280 625,1278 635,1270 655,1270 665,1294 675,1300 697,1352", "grayln"),
        line("697,1352 705,1203 715,1197 727,1217 737,1213 745,1200 757,1188 768,1198 777,1217", "coral"),
        line("777,1217 785,1243 795,1250 806,1294 815,1279 825,1290 835,1287 855,1267 877,1232", "grayln"),
        line("877,1232 886,1219 895,1222", "coral"),
        line("895,1222 906,1241 930,1230 940,1235 960,1230 968,1238 978,1255 990,1250 1015,1248", "grayln"),
        line("1015,1248 1028,1225", "coral"),
        line("1028,1225 1045,1253 1065,1259 1080,1254 1088,1267 1105,1270 1117,1287", "grayln"),
        line("1117,1287 1128,1214 1137,1204 1146,1209", "coral"), line("1146,1209 1158,1228", "grayln"),
      ],
      labels: [L(1191, "80"), L(1270, "60"), L(1345, "40"), L(1224, "69.5604", "steel")],
    },
  ],
  times: nqTimes, thumb: [92, 8], drawings: "Drawing set: Default", canZoomOut: true,
};

const cpce: PanelData = {
  symbol: "$CPCE", tone: "mute", price: ".841", change: ["+.102", "+13.80%"], quote: ["B: N/A", "A: N/A"], tools: ["5m"],
  info: ["$CPCE 5 D 5m", "D: 11/20/23, 12:15 PM", "O: 0.85", "..."],
  plots: [{
    grow: 409, x: [27, 858], y: [250, 1437], theme: "dark bright", gx: [], gy: [306, 468, 631, 794, 957, 1119, 1282],
    under: daysOf(250, 1437),
    art: [
      ...["36,1270 50,1215 65,1165 80,1120 105,1070 125,1035 150,985 175,945 200,905 225,845 228,900", "230,1420 245,1360 270,1285 290,1215 310,1170 350,1110 385,1045 425,995 445,955 454,942", "458,1420 480,1355 500,1310 520,1245 550,1190 580,1120 610,1065 645,1000 660,970 675,950 682,905 688,960", "690,1415 700,1370 720,1285 745,1235 765,1185 785,1155 805,1130 818,1100 821,1130"].flatMap((d) => bars(d, 3, 1437, "vol", 9, 4)),
      ...marks(1000, 1437), upright(689, 250, 1437, "expiry"),
      ...slopes("36,1345 40,1392 44,1380 49,1370 53,808 58,845 62,868 70,920 78,905 85,900 95,903 101,882 105,980 113,1000 128,1015 136,958 148,962 155,930 165,928 173,907 185,918 200,930 207,912 213,915 219,880 225,903 230,905 233,1168 236,1105 239,1155 242,858 248,1142 256,1105 263,1140 268,1112 272,1140 280,1070 290,1030 296,895 303,897 308,893 318,905 330,935 336,955 344,950 355,920 363,905 368,855 375,870 382,830 388,820 400,837 412,850 425,838 432,840 437,825 445,830 455,840 458,845 460,1035 463,838 468,915 472,920 475,1165 479,905 483,912 487,905 493,925 500,1010 508,1015 517,1085 530,1085 545,1108 552,1105 557,1010 572,1003 580,1022 602,1018 610,1065 618,1068 628,1092 642,1100 647,1010 655,1022 675,1060 680,990 685,992 688,648 692,1195 694,1042 698,1293 704,1185 706,1195 712,1168 719,1166 722,295 726,330 731,335 736,395 740,440 745,482 749,435 758,462 766,515 775,540 783,580 798,568 808,600 815,615 818,632 821,660"),
    ],
    labels: [L(307, "0.95"), L(470, "0.9"), L(632, "0.85"), L(796, "0.8"), L(958, "0.75"), L(1120, "0.7"), L(1283, "0.65"), L(656, "0.84", "red")],
    expiry: [667, 1314],
  }],
  times: dayTimes, thumb: [36, 64], drawings: "Shared drawings", help: true,
};

const pcnd: PanelData = {
  symbol: "$PCND", tone: "mute", price: ".6603", change: ["-.0919", "-12.22%"], quote: ["B: N/A", "A: N/A"], tools: ["5m"],
  info: ["$PCND 5 D 5m", "D: 11/20/23, 12:15 PM", "O: 0.66", "..."],
  plots: [{
    grow: 418, x: [27, 858], y: [135, 1389], theme: "dark bright", gx: [], gy: [166, 298, 430, 562, 694, 826, 958, 1090, 1222, 1354],
    under: daysOf(135, 1389),
    art: [
      ...["36,1250 50,1150 70,1090 85,1110 100,1010 120,1000 150,1010 172,960 190,980 205,920 222,800 228,850", "232,1370 250,1300 275,1240 290,1110 310,1160 340,1120 380,1080 403,990 440,1000 448,930 455,950", "460,1370 480,1280 500,1260 518,1150 550,1160 590,1120 605,980 640,1030 680,950 686,1000", "690,1370 710,1310 740,1240 770,1190 800,1170 821,1160"].flatMap((d, i) => {
        const edge = pts(d)[0][0];
        return sample(pts(d), 3).map(([x, y]) => {
          const t = y + noise(x + i) * Math.min(130, (x - edge) * 1.4);
          return svg`<rect class="vol" x=${x - 2} y=${t} width="4" height=${1389 - t}></rect>`;
        });
      }),
      ...marks(1100, 1389), upright(689, 135, 1389, "expiry"),
      ...slopes("34,1258 38,1260 40,1303 44,1258 55,1255 65,1252 70,1218 75,1343 88,1297 97,1288 103,1250 112,1253 116,1298 124,1295 136,1247 158,1243 162,1213 167,1212 172,1130 178,1020 186,1002 190,1013 207,992 216,992 221,1003 225,985 231,972 233,913 239,1020 242,975 245,1020 249,985 255,990 260,975 265,993 270,985 280,903 285,940 296,920 305,880 315,881 322,893 332,885 350,905 363,897 385,880 405,876 411,828 421,820 425,740 432,738 442,722 452,735 458,748 464,272 473,520 478,703 482,595 491,655 498,680 507,688 513,725 525,745 540,795 548,798 556,812 572,807 588,805 600,818 620,828 635,838 650,858 655,855 660,805 673,828 680,813 686,818 692,1334 696,1325 705,1220 712,1175 718,1165 725,1135 727,1075 735,1092 747,1100 753,1108 765,1083 783,1065 792,1042 800,1038 807,1060 813,1053 821,1063"),
    ],
    labels: [L(168, "1"), L(300, "0.95"), L(432, "0.9"), L(564, "0.85"), L(696, "0.8"), L(828, "0.75"), L(960, "0.7"), L(1092, "0.65"), L(1224, "0.6"), L(1356, "0.55"), L(1058, "0.66", "red")],
    bubble: { x: 448, y: 223, t: "Hi: 0.96", tip: [464, 272], side: "up" },
    expiry: [667, 1262],
  }],
  times: dayTimes, thumb: [36, 64], drawings: "Shared drawings", help: true,
};

/* ---------- chart panel ---------- */

@customElement("chart-panel")
export class ChartPanel extends LitElement {
  @property({ attribute: false }) data!: PanelData;

  static styles = [iconCss, css`
    :host { display: block; min-width: 0; min-height: 0; font: 11px/16px "Open Sans", "Noto Sans", sans-serif; color: #8c8c8c; }
    .panel { display: flex; flex-direction: column; height: 100%; background: #0a0a0a; box-shadow: inset -1px -1px #3a3a3a; }
    .panel.active { box-shadow: inset 0 0 0 1px #003c5c; }
    .head { display: flex; flex: 0 0 23px; align-items: stretch; background: #4a4a4a; overflow: hidden; box-shadow: inset 0 1px #5a5a5a; }
    .active .head { background: #043a59; box-shadow: none; }
    .active .hole { fill: #043a59; }
    .symbol { position: relative; flex: 0 0 102px; margin: 3px 0 3px 2px; display: flex; }
    .symbol select { appearance: none; flex: 1; width: 100%; font: inherit; color: #f0f0f0; background: #101010; border: 1px solid #303030; border-radius: 1px; padding: 0 6px; margin: 0; }
    .symbol .drop { position: absolute; right: 1px; top: 1px; bottom: 1px; width: 17px; background: #505050; pointer-events: none; display: grid; place-items: center; }
    .symbol .drop::after { content: ""; border: 4px solid transparent; border-top: 4px solid #a0a0a0; border-bottom: 0; }
    .cell { position: relative; display: grid; place-items: center; flex: 0 0 auto; border-right: 1px solid #5c5c5c; padding: 0 6px; white-space: nowrap; overflow: hidden; }
    .active .cell { border-color: #1d5272; }
    .link { width: 19px; padding: 0; }
    .tool { width: 35px; padding: 0; box-sizing: border-box; }
    .tool.text { width: 41px; color: #d8d8d8; font-weight: 600; }
    .more::after, .drawings::after { content: ""; position: absolute; right: 4px; bottom: 2px; border: 2px solid transparent; border-right-color: #d8d8d8; border-bottom-color: #d8d8d8; }
    .last { border-right: 0; }
    .rest { flex: 1; }
    .menu { border-left: 1px solid #5c5c5c; border-right: 0; }
    .badge { background: #9a6a00; color: #3c2c08; border-radius: 2px; width: 10px; line-height: 13px; text-align: center; font-weight: 600; }
    .price { font-size: 14px; font-weight: 700; color: #959595; }
    .pair { display: block; font-size: 9px; line-height: 9px; padding: 2px 6px 0; }
    .pair.move { padding: 2px 5px 0; }
    .pair span { display: block; }
    .gain .price, .gain .pair { color: #0dbb35; }
    .gain .ask { color: #7fbf9a; }
    .row { display: grid; grid-template-columns: minmax(0, 1fr) 61px; flex: 0 0 21px; padding-left: 2px; }
    .section { flex-basis: 0; flex-shrink: 1; min-height: 0; }
    .gap { flex: 0 0 3px; }
    .cells { display: flex; overflow: hidden; border: 1px solid #5a5a5a; border-bottom: 0; box-sizing: border-box; }
    .cells span { flex: 0 0 auto; border-right: 1px solid #5a5a5a; padding: 1px 4px 0 3px; line-height: 18px; white-space: pre; }
    .cells span:first-child { padding-right: 6px; }
    .info .cells span:first-child { color: #fff; font-weight: 700; }
    .info .cells span.more-info { padding: 1px 1px 0; border-right: 0; }
    .style { padding: 3px 0 0 5px; }
    .mint { color: #7fdcae; } .redtext { color: #e00000; } .dim { color: #6e6e6e; } .cream { color: #f0e6a8; }
    .white { color: #f0f0f0; } .mid { color: #8c8c8c; } .redsoft { color: #f04a4a; }

    .plot { position: relative; overflow: hidden; background: #1b1b1b; --grid: #5e5e5e; }
    .plot.light { background: #fff; --grid: #2c2c2c; }
    .plot.bright { --grid: #b8b8b8; }
    .plot::after { content: ""; position: absolute; inset: 0; border: 1px solid #606060; pointer-events: none; }
    .plot > svg { position: absolute; inset: 0; width: 100%; height: 100%; shape-rendering: crispEdges; }
    .plot > svg * { vector-effect: non-scaling-stroke; }
    .dot { stroke: var(--grid); stroke-dasharray: 1 5; }
    .tk { stroke: var(--grid); }
    .g, .up { fill: #07c030; } .r, .down { fill: #ff5c5c; } .w { fill: #b4b4b4; } .m { fill: #98efc4; }
    .up { stroke: #07c030; } .down { stroke: #f2605c; }
    .up, .down { shape-rendering: auto; stroke-width: 1.300; }
    .vol { fill: #104a62; } .mark { stroke: #11587a; }
    .band { fill: #3d3d3d; }
    .day { stroke: #747474; stroke-dasharray: 10 4; }
    .expiry { stroke: #b01212; stroke-dasharray: 14 5 3 5; }
    .hair { stroke: #8a8a8a; }
    .zr { stroke: #ff0000; } .zg { stroke: #00ff00; } .zp { stroke: #ff8a8a; }
    .lr { stroke: #ff1c1c; stroke-dasharray: 22 6; } .sr { stroke: #ff4040; stroke-dasharray: 5 7; }
    .lg { stroke: #00ff00; stroke-dasharray: 22 6; } .lc { stroke: #00f0ff; stroke-dasharray: 22 6; }
    .lime { fill: #00ff00; } .pure { fill: #ff0000; }
    .rule { stroke: #ff3c3c; }
    .khaki { stroke: #f3e795; }
    .ln { fill: none; shape-rendering: auto; stroke-width: 1.300; }
    .navy { stroke: #2626a4; } .cyan { stroke: #22f4ff; } .amber { stroke: #e8c840; } .pink { stroke: #ff66ff; } .brown { stroke: #3a0a0a; }
    .grayln { stroke: #8a8a8a; } .coral { stroke: #ff6a6a; }
    .ay { fill: #ffff28; } .ac { fill: #28f4ff; } .ay, .ac { shape-rendering: auto; }
    .tip { fill: #dedede; stroke: #9a9a9a; shape-rendering: auto; }

    .over { position: absolute; inset: 0; display: flex; gap: 1px; padding: 3px 0 0 4px; align-items: flex-start; }
    .chiprows { display: flex; flex-direction: column; gap: 2px; }
    .chiprow { display: flex; gap: 2px; }
    .chiprow + .chiprow { padding-left: 2px; }
    .chip { padding: 0 2px; line-height: 20px; color: #1c2a1c; font-weight: 700; white-space: pre; }
    .chip.lime { background: #00ff00; } .chip.gold { background: #ffc400; } .chip.pure { background: #ff0000; color: #3c0a0a; }
    .alert { padding: 1px 0 0; }
    .alert.faint { opacity: 0.25; } .alert.pale { opacity: 0.9; }
    .alert.pale .dark, .alert.faint .dark { stroke: #fff; }
    .bubble { position: absolute; transform: translateY(-50%); padding: 0 5px; line-height: 17px; border-radius: 4px; color: #333; background: #dedede; border: 1px solid #b0b0b0; white-space: nowrap; z-index: 1; }
    .expdate { position: absolute; writing-mode: vertical-rl; transform: translate(-50%, -50%) rotate(180deg); color: #a01616; line-height: 12px; }

    .axis { position: relative; overflow: hidden; color: #969696; margin-right: 3px; }
    .axis .lab { position: absolute; left: 2px; transform: translateY(-50%); line-height: 14px; white-space: nowrap; }
    .axis .tag { left: 2px; padding: 0 2px; line-height: 12px; border-radius: 3px; border: 1px solid transparent; color: #1c1c1c; }
    .tag.gray { background: #a0a0a0; } .tag.red { background: #ff5c5c; border-color: #c84040; color: #3c0a0a; } .tag.lime { background: #00ff00; border-color: #00b800; color: #0a4a0a; }
    .tag.mint { background: #98efc4; border-color: #5cae88; color: #1c3c2c; } .tag.pure { background: #ff0000; border-color: #ff6a6a; color: #fff; }
    .tag.green { background: #07c030; border-color: #5ce080; color: #e8ffe8; } .tag.navy { background: #00009a; border-color: #6a6ae0; color: #fff; }
    .tag.yellow { background: #ffff28; border-color: #a8a820; } .tag.cyan { background: #28ffff; border-color: #189a9a; } .tag.pink { background: #ff5cff; border-color: #a83ca8; }
    .tag.brown { background: #340000; border-color: #8a5c5c; color: #f0f0f0; } .tag.steel { background: #808080; border-color: #b0b0b0; color: #f4f4f4; }
    .unit { position: absolute; right: 0; top: 50%; writing-mode: vertical-rl; transform: translateY(-50%) rotate(180deg); line-height: 14px; }
    .time { position: relative; flex: 0 0 20px; margin: 0 61px 0 2px; color: #8c8c8c; }
    .time span { position: absolute; top: 2px; white-space: nowrap; line-height: 16px; }
    .time .tag { top: 1px; padding: 0 3px; border-radius: 3px; color: #222; background: #a8a8a8; }

    .foot { display: flex; flex: 0 0 18px; align-items: center; color: #e4e4e4; }
    .scroll { position: relative; flex: 1; display: flex; height: 13px; align-items: center; background: #1b1b1b; margin-left: 1px; }
    .arr { flex: 0 0 13px; height: 13px; display: grid; place-items: center; }
    .arr.first { flex-basis: 15px; justify-items: start; padding-left: 2px; box-sizing: border-box; }
    .arr::after { content: ""; border: 3px solid transparent; border-right: 3px solid #8c8c8c; border-left: 0; }
    .arr.next::after { border-right: 0; border-left: 3px solid #8c8c8c; }
    .track { flex: 1; height: 13px; }
    .thumb { height: 13px; background: #444; display: grid; place-items: center; }
    .thumb::after { content: ""; width: 5px; height: 4px; background: repeating-linear-gradient(90deg, #8a8a8a 0 1px, transparent 1px 2px); }
    .drawer { position: absolute; left: 73px; top: 0; width: 31px; height: 18px; box-sizing: border-box; background: #4c4c4c; border: 1px solid #6a6a6a; display: grid; place-items: center; }
    .tools { display: flex; gap: 4px; padding: 0 12px 0 3px; align-items: center; }
    .off { opacity: 0.15; }
    .drawings { position: relative; padding-right: 10px; white-space: nowrap; }
    .drawings::after { right: 3px; bottom: 0; }
    .drawings.shared { padding-right: 8px; } .drawings.shared::after { right: 2px; }
    .help { margin: 0 4px 0 4px; }
  `];

  private plotTpl(p: Plot) {
    const [x1, x2] = p.x;
    const [y1, y2] = p.y;
    const px = (x: number) => `${((x - x1) / (x2 - x1)) * 100}%`;
    const py = (y: number) => `${((y - y1) / (y2 - y1)) * 100}%`;
    const b = p.bubble;
    return html`
      ${p.heading ? html`<div class="row"><div class="cells">${p.heading.map(([t, c]) => html`<span class=${c}>${t}</span>`)}</div><div></div></div>` : nothing}
      <div class="row section" style="flex-grow:${p.grow}">
        <div class="plot ${p.theme}">
          <svg viewBox="${x1} ${y1} ${x2 - x1} ${y2 - y1}" preserveAspectRatio="none" aria-hidden="true">
            ${p.under ?? nothing}
            ${p.gx.map((x) => svg`${upright(x, y1, y2, "dot")}${upright(x, y1, y1 + 16, "tk")}${upright(x, y2 - 14, y2, "tk")}`)}
            ${p.gy.map((y) => svg`${level(x1, x2, y, "dot")}${level(x1, x1 + 16, y, "tk")}${level(x2 - 13, x2, y, "tk")}`)}
            ${p.art ?? nothing}
            ${b ? svg`<polygon class="tip" points=${`${b.tip[0]},${b.tip[1]} ${b.x + 18},${b.y + (b.side === "up" ? 22 : -22)} ${b.x + 34},${b.y + (b.side === "up" ? 22 : -22)}`}></polygon>` : nothing}
          </svg>
          ${p.expiry ? html`<span class="expdate" style="left:${px(p.expiry[0])};top:${py(p.expiry[1])}">11/17/23</span>` : nothing}
          ${b ? html`<span class="bubble" style="left:${px(b.x)};top:${py(b.y)}">${b.t}</span>` : nothing}
          ${p.alert || p.chips ? html`<div class="over">
            ${p.alert ? html`<span class="alert ${p.alert}">${icon("alert")}</span>` : nothing}
            ${p.chips ? html`<div class="chiprows">${p.chips.map((r) => html`<div class="chiprow">${r.map(([t, c]) => html`<span class="chip ${c}">${t}</span>`)}</div>`)}</div>` : nothing}
          </div>` : nothing}
        </div>
        <div class="axis">
          ${p.labels.map((l) => html`<span class="lab ${l.tag ? `tag ${l.tag}` : ""}" style="top:${py(l.y)}">${l.t}</span>`)}
          ${p.unit ? html`<span class="unit">${p.unit}</span>` : nothing}
        </div>
      </div>`;
  }

  render() {
    const d = this.data;
    const [x1, x2] = d.plots[0].x;
    const px = (x: number) => `${((x - x1) / (x2 - x1)) * 100}%`;
    return html`<section class=${classMap({ panel: true, active: !!d.active, gain: d.tone === "gain" })} aria-label=${d.symbol}>
      <header class="head">
        <label class="symbol"><select aria-label="Symbol"><option>${d.symbol}</option></select><span class="drop"></span></label>
        <button class="cell link more" aria-label="Link">${d.badge ? html`<span class="badge">${d.badge}</span>` : icon("link")}</button>
        <div class="cell price">${d.price}</div>
        <div class="cell pair move"><span>${d.change[0]}</span><span>${d.change[1]}</span></div>
        <div class="cell pair"><span>${d.quote[0]}</span><span class="ask">${d.quote[1]}</span></div>
        ${d.tools.map((t, i) => html`<button aria-label=${t} class=${classMap({ cell: true, tool: true, text: t === "5m", more: t !== "gear", last: i === d.tools.length - 1 })}>${t === "5m" ? t : icon(t)}</button>`)}
        <span class="rest"></span>
        <button class="cell tool menu more" aria-label="Menu">${icon("list")}</button>
      </header>
      <div class="row info">
        <div class="cells">${d.info.map((t) => t[0] === "*" ? html`<span class="white">${t.slice(1)}</span>` : html`<span class=${t === "..." ? "more-info" : ""}>${t}</span>`)}</div>
        <div class="style">${icon("curve")}</div>
      </div>
      ${d.plots.map((p, i) => html`${i ? html`<div class="gap"></div>` : nothing}${this.plotTpl(p)}`)}
      <div class="time">
        ${d.times.map(([x, t]) => html`<span style="left:${px(x)}">${t}</span>`)}
        ${d.timeTag ? html`<span class="tag" style="left:${px(d.timeTag[0])}">${d.timeTag[1]}</span>` : nothing}
      </div>
      <footer class="foot">
        <div class="scroll">
          <button class="arr first" aria-label="Scroll left"></button>
          <div class="track"><div class="thumb" style="margin-left:${d.thumb[0]}%;width:${d.thumb[1]}%"></div></div>
          <button class="arr" aria-label="Step back"></button><button class="arr next" aria-label="Step forward"></button>
          ${d.drawer ? html`<button class="drawer" aria-label="Show drawer"><svg width="10" height="10" viewBox="0 0 10 10"><path fill="#dcdcdc" d="M1 2h8v2H1zM5 6l3 4H2z"/></svg></button>` : nothing}
        </div>
        <div class="tools">
          <button aria-label="Pan">${icon("pan")}</button>
          <button aria-label="Crosshair">${icon("cross")}</button>
          <button aria-label="Zoom in">${icon("zoomin")}</button>
          <button aria-label="Zoom out" class=${d.canZoomOut ? "" : "off"}>${icon("zoomout")}</button>
          <button aria-label="Pointer">${icon("cursor")}</button>
        </div>
        <button class="drawings ${d.help ? "shared" : ""}">${d.drawings}</button>
        ${d.help ? html`<button class="help" aria-label="Help">${icon("help", 14)}</button>` : nothing}
      </footer>
    </section>`;
  }
}

/* ---------- window ---------- */

@customElement("app-root")
export class AppRoot extends LitElement {
  static styles = [iconCss, css`
    :host { display: flex; flex-direction: column; height: 100vh; overflow: hidden; background: #000; font: 11px/16px "Open Sans", "Noto Sans", sans-serif; color: #d0d0d0; }
    .title { display: flex; flex: 0 0 20px; align-items: flex-start; background: #fff; color: #000; }
    .logo { flex: 0 0 16px; display: block; }
    .caption { padding-left: 5px; flex: 1; white-space: nowrap; font-size: 12px; line-height: 17px; }
    .win { width: 46px; height: 15px; display: grid; place-items: center; }
    .win svg { display: block; }
    .bar { display: flex; flex: 0 0 21px; background: #4a4a4a; align-items: stretch; }
    .tab { display: flex; align-items: center; gap: 6px; margin: 2px 3px 4px 2px; padding: 0 6px; background: #0a0a0a; border-radius: 4px; }
    .edge { border-left: 1px solid #5c5c5c; flex: 1; }
    .tool { position: relative; width: 35px; border-left: 1px solid #5c5c5c; display: grid; place-items: center; }
    .more::after { content: ""; position: absolute; right: 2px; bottom: 2px; border: 2px solid transparent; border-right-color: #d8d8d8; border-bottom-color: #d8d8d8; }
    .main { display: grid; flex: 1 0 calc(100vh - 36px); grid-template-columns: minmax(0, 518fr) minmax(0, 525fr) minmax(0, 522fr) minmax(0, 340fr); gap: 4px; background: #101010; }
    .col { display: grid; gap: 4px; min-width: 0; min-height: 0; grid-template-rows: minmax(0, 491fr) minmax(0, 500fr); }
    .col.even { grid-template-rows: minmax(0, 495fr) minmax(0, 496fr); }
  `];

  render() {
    return html`
      <div class="title">
        <svg class="logo" width="16" height="16" viewBox="0 0 16 16"><rect width="16" height="16" fill="#0c5c1c"/><path fill="none" stroke="#8ce04c" stroke-width="1.600" d="M8 8L3 2M8 8l5-5M8 8l6 2M8 8L2 9M8 8l-4 6M8 8l2 7M8 8V1"/></svg>
        <span class="caption">$VOLD, $TICK, $ADD, TNX, $CPCE, SPX, /NQ:XCME, $PCND - Flexible Grid Main@thinkorswim [build 1979]</span>
        <button class="win" aria-label="Minimize"><svg width="10" height="10"><path stroke="#000" d="M0 5.500h10"/></svg></button>
        <button class="win" aria-label="Restore"><svg width="10" height="10"><path fill="none" stroke="#000" d="M.5 2.500h7v7h-7zM2.500 2.500v-2h7v7h-2"/></svg></button>
        <button class="win" aria-label="Close"><svg width="10" height="10"><path stroke="#000" d="M0 0l10 10M10 0L0 10"/></svg></button>
      </div>
      <div class="bar">
        <button class="tab"><svg width="14" height="14" viewBox="0 0 14 14"><path fill="#7cc0ec" d="M0 0h6v7H0zM8 0h5v3H8zM8 5h5v8H8zM2 9h4v4H2z"/></svg>Flexible Grid</button>
        <span class="edge"></span>
        <button class="tool more" aria-label="Grid layout">${icon("grid", 14)}</button>
        <button class="tool" aria-label="Pin">${icon("pin", 14)}</button>
        <button class="tool more" aria-label="Menu">${icon("list")}</button>
      </div>
      <main class="main">
        <div class="col even"><chart-panel .data=${vold}></chart-panel><chart-panel .data=${tick}></chart-panel></div>
        <div class="col"><chart-panel .data=${add}></chart-panel><chart-panel .data=${spx}></chart-panel></div>
        <div class="col"><chart-panel .data=${tnx}></chart-panel><chart-panel .data=${nq}></chart-panel></div>
        <div class="col"><chart-panel .data=${cpce}></chart-panel><chart-panel .data=${pcnd}></chart-panel></div>
      </main>`;
  }
}
